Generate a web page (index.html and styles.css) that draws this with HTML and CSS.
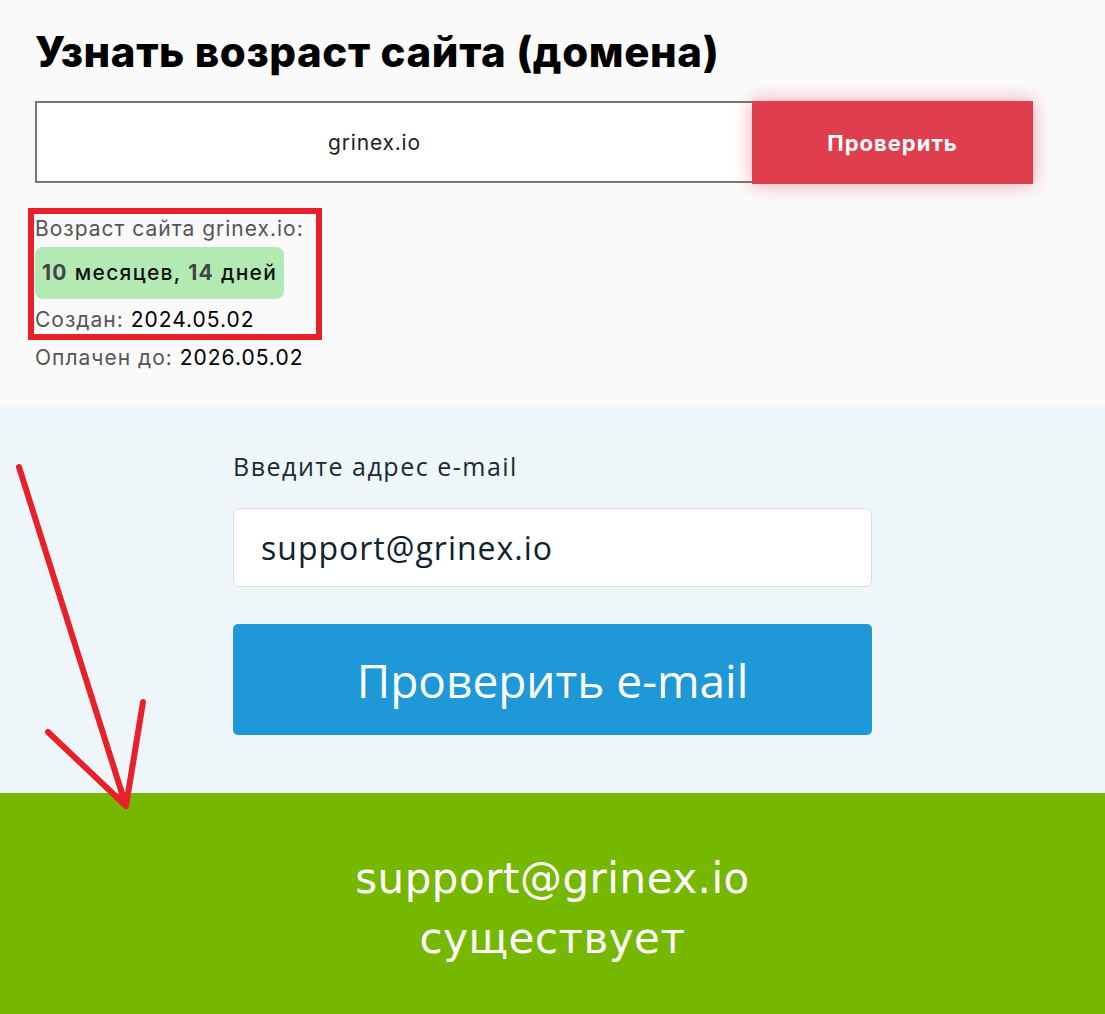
FILE: index.html
```html
<!DOCTYPE html>
<html lang="ru">
<head>
  <meta charset="UTF-8">
  <meta name="viewport" content="width=device-width, initial-scale=1">
  <title>Возраст сайта</title>
  <link rel="stylesheet" href="styles.css">
</head>
<body>

  <section class="age-section">
    <h1>Узнать возраст сайта (домена)</h1>

    <form class="age-form">
      <input type="text" class="age-input" value="grinex.io">
      <button type="button" class="age-btn">Проверить</button>
    </form>

    <div class="age-result">
      <div class="marked">
        <div class="line">Возраст сайта grinex.io:</div>
        <div class="age-pill"><b>10</b> месяцев, <b>14</b> дней</div>
        <div class="line">Создан: <span class="val">2024.05.02</span></div>
      </div>
      <div class="line paid">Оплачен до: <span class="val">2026.05.02</span></div>
    </div>
  </section>

  <section class="mail-section">
    <div class="mail-box">
      <label class="mail-label">Введите адрес e-mail</label>
      <input type="text" class="mail-input" value="support@grinex.io">
      <button type="button" class="mail-btn">Проверить e-mail</button>
    </div>

    <!-- стрелка-пометка -->
    <svg class="arrow" width="160" height="360" viewBox="0 0 160 360">
      <path d="M19 7 L126 346 M48 272 L126 346 M143 242 L126 346"
            fill="none" stroke="#e8202a" stroke-width="6" stroke-linecap="round" stroke-linejoin="round"/>
    </svg>
  </section>

  <section class="mail-result">
    <p>support@grinex.io<br>существует</p>
  </section>

</body>
</html>
```

FILE: styles.css
```css
body {
  margin: 0;
  font-family: "Open Sans", sans-serif;
  color: #222;
}

/* Возраст домена */
.age-section {
  background: #fafafa;
  padding: 29px 35px 37px;
}

h1 {
  margin: 0 0 26px;
  font-family: Inter, sans-serif;
  font-weight: 800;
  font-size: 42px;
  letter-spacing: 0.6px;
  line-height: 46px;
  color: #000;
}

.age-form {
  display: flex;
  width: 998px;
  height: 83px;
}

.age-input {
  flex: 1;
  border: 2px solid #777;
  border-right: none;
  background: #fff;
  padding: 0 40px 0 0;
  text-align: center;
  font-family: Inter, sans-serif;
  font-size: 21px;
  letter-spacing: 0.8px;
  color: #222;
  height: 82px;
  box-sizing: border-box;
}

.age-btn {
  width: 281px;
  border: none;
  background: #df3e4e;
  color: #fff;
  font-family: Inter, sans-serif;
  font-weight: 700;
  font-size: 22px;
  letter-spacing: 1px;
  box-shadow: 0 0 18px rgba(230, 60, 75, 0.45);
}

.age-result {
  margin-top: 24px;
  font-family: Inter, sans-serif;
  font-size: 21px;
  letter-spacing: 1px;
  line-height: 24px;
  color: #555;
}

.marked {
  width: 281px;
  margin-left: -7px;
  padding: 3px 0 2px 1px;
  border: 6px solid #e8202a;
}

.line {
  height: 24px;
  line-height: 24px;
}

.val {
  color: #000;
}

.age-pill {
  display: inline-block;
  vertical-align: top;
  margin: 6px 0 9px;
  padding: 0 7px;
  height: 52px;
  line-height: 52px;
  background: #b3eab3;
  border-radius: 8px;
  color: #111;
  font-size: 21px;
  letter-spacing: 1.3px;
  font-weight: 500;
}

.age-pill b {
  color: #444;
  font-weight: 700;
}

.paid {
  margin-top: 6px;
}

/* Проверка e-mail */
.mail-section {
  position: relative;
  background: #eff6fa;
  padding: 44px 0 58px;
}

.mail-box {
  width: 639px;
  margin: 0 auto;
  display: flex;
  flex-direction: column;
}

.mail-label {
  font-size: 25px;
  letter-spacing: 1.5px;
  line-height: 30px;
  color: #1a2a35;
  margin-bottom: 27px;
}

.mail-input {
  height: 79px;
  box-sizing: border-box;
  border: 1px solid #dcdcdc;
  border-radius: 7px;
  background: #fff;
  padding: 0 27px;
  font-family: "Open Sans", sans-serif;
  font-size: 32px;
  letter-spacing: 1px;
  color: #0f2230;
}

.mail-btn {
  margin-top: 37px;
  height: 111px;
  border: none;
  border-radius: 5px;
  background: #1e98d6;
  color: #fff;
  font-family: "Open Sans", sans-serif;
  font-size: 46px;
}

.arrow {
  position: absolute;
  left: 0;
  top: 53px;
  overflow: visible;
}

.mail-result {
  background: #76b800;
  padding: 56px 0 60px;
  text-align: center;
}

.mail-result p {
  margin: 0;
  color: #fff;
  font-family: "DejaVu Sans", sans-serif;
  font-size: 42px;
  letter-spacing: 0.5px;
  line-height: 60px;
}
```
